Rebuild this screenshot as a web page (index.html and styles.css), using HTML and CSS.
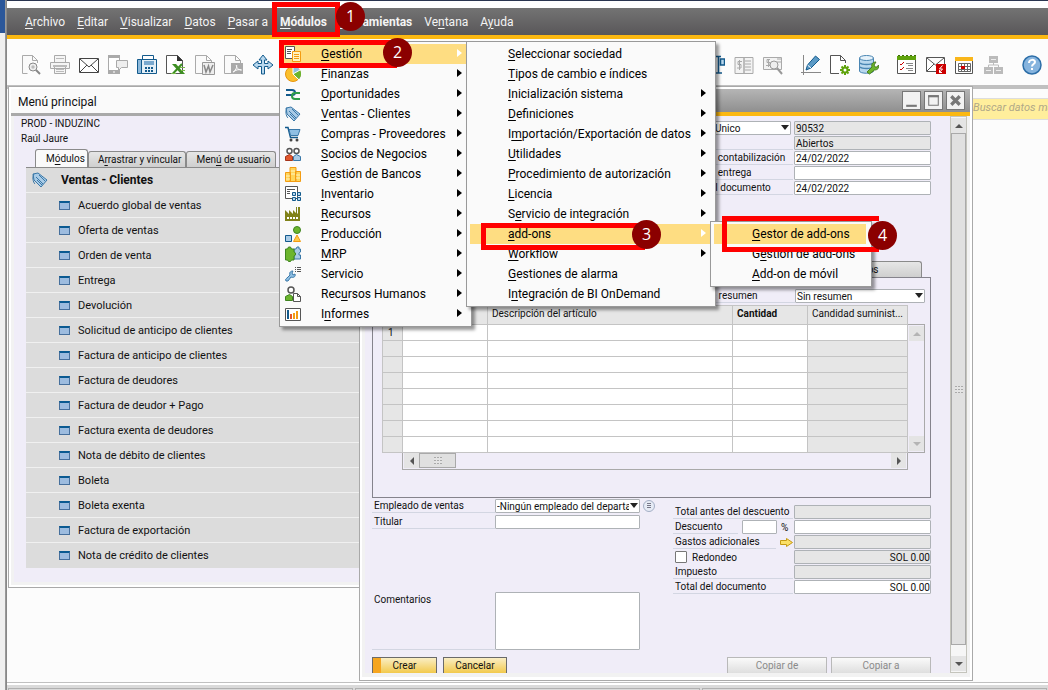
FILE: index.html
```html
<!DOCTYPE html>
<html lang="es">
<head>
<meta charset="utf-8">
<title>Menú principal</title>
<link rel="stylesheet" href="styles.css">
</head>
<body>
<div class="screen">
<div class="edge"></div>
<div class="app">
<div class="topstrip"></div>
<nav class="menubar">
<button><u>A</u>rchivo</button><button><u>E</u>ditar</button><button><u>V</u>isualizar</button><button><u>D</u>atos</button><button><u>P</u>asar a</button><button class="strong"><u>M</u>ódulos</button><button class="strong"><u>H</u>erramientas</button><button>Ve<u>n</u>tana</button><button>A<u>y</u>uda</button>
</nav>

<div class="toolbar">
<button aria-label="Vista previa"><svg viewBox="0 0 20 20"><path d="M16.500 8V5.500l-5-5h-10v18h5M11.500.500v5h5" fill="#fafafa" stroke="#aaa"/><circle cx="12" cy="12" r="4" fill="#eee" stroke="#888"/><circle cx="12" cy="12" r="1.700" fill="#bbb"/><path d="M15 15l4 4" stroke="#888" stroke-width="2"/></svg></button>
<button aria-label="Imprimir"><svg viewBox="0 0 20 20"><path d="M4.500 7V.5h11V7M.5 7.500h19v6H.5zM4.500 11.500h11v7h-11z" fill="#f5f5f5" stroke="#aaa"/><path d="M3 10h14v2H3z" fill="#bbb"/><path d="M6 14.500h8M6 16.500h8M6 3.500h8" stroke="#bbb"/></svg></button>
<button aria-label="Correo"><svg viewBox="0 0 20 20"><path d="M.5 3.500h19v14H.5zM1 4l9 8 9-8M1 17l7-7M19 17l-7-7" fill="#fff" stroke="#444"/></svg></button>
<button aria-label="SMS"><svg viewBox="0 0 20 20"><path d="M.5.500h11v18H.5z" fill="#fff" stroke="#aaa"/><path d="M0 0h12v3H0zM0 15h12v4H0z" fill="#aaa"/><path d="M5 17h2" stroke="#fff"/><path d="M8.500 5.500h11v7h-6l-3 3v-3h-2z" fill="#eee" stroke="#aaa"/></svg></button>
<button aria-label="Fax"><svg viewBox="0 0 20 20"><path d="M5.500.500h11v4h-11z" fill="#fff" stroke="#135a8c"/><path d="M.5 4.500h4v14h-4z" fill="#8db9db" stroke="#135a8c"/><path d="M4.500 4.500h15v14h-15z" fill="#e4eff7" stroke="#135a8c"/><path d="M7 6h10v4H7z" fill="#7aa9cf"/><path d="M8 13h9M8 16h9" stroke="#135a8c" stroke-width="2" stroke-dasharray="2 1"/></svg></button>
<button aria-label="Excel"><svg viewBox="0 0 20 20"><path d="M.5.500h11l5 5v13H.5z" fill="#fff" stroke="#555"/><path d="M11 0v6h6z" fill="#333"/><path d="M6 9h4l9 10h-4z" fill="#3d8f22"/><path d="M16 9L7 18.500" stroke="#3d8f22" stroke-width="2"/><path d="M14 12.500h5M15 15.500h4M5 18.500h5" stroke="#77b84a"/></svg></button>
<button aria-label="Word"><svg viewBox="0 0 20 20"><path d="M.5.500h11l5 5v13H.5zM11.500.500v5h5" fill="#fafafa" stroke="#aaa"/><path d="M7.500 7.500h12v12h-12z" fill="#eee" stroke="#999"/><path d="M9 10l2 7 2.500-6 1.500 6 3-7" fill="none" stroke="#888" stroke-width="1.500"/></svg></button>
<button aria-label="PDF"><svg viewBox="0 0 20 20"><path d="M.5.500h11l5 5v13H.5zM11.500.500v5h5" fill="#fafafa" stroke="#aaa"/><path d="M7 8h12v11H7z" fill="#aaa"/><path d="M9 17c4-2 4-7 3.500-7s0 5 5 5c-3-1-6 0-8 2" stroke="#fff" fill="none"/></svg></button>
<button aria-label="Mover"><svg viewBox="0 0 20 20"><path d="M10 0l4 5h-2.500v3.500H15V6l5 4-5 4v-2.500h-3.500V19h-3v-7.500H5V14l-5-4 5-4v2.500h3.500V5H6z" fill="#b9d8ee" stroke="#135a8c"/></svg></button>
<span class="spacer"></span>
<button aria-label="Balance"><svg viewBox="0 0 20 20"><path d="M6 1.500h10M13.500 2v16M10 18h7M2 5.500h6v6H2zM15.500 4v6h4V4z" fill="#b9d8ee" stroke="#135a8c" stroke-width="1.500"/></svg></button>
<button aria-label="Asiento"><svg viewBox="0 0 20 20"><path d="M1 2.500h9v16H1zM10 2.500h9v16h-9z" fill="#f3f3f3" stroke="#aaa"/><path d="M8 6.500H4v3h3v3.500H3M5.500 5v10M11 6h6M11 9h6M11 12h6M11 15h6" fill="none" stroke="#aaa"/></svg></button>
<button aria-label="Ver asiento"><svg viewBox="0 0 20 20"><path d="M.5 2.500h18v12H.5z" fill="#f3f3f3" stroke="#aaa"/><path d="M7 4.500H4v3h3v3H3M5.500 4v8M14 4h4M14 7h4" fill="none" stroke="#aaa"/><circle cx="11" cy="10" r="4" fill="#eee" stroke="#999"/><path d="M14 13l5 6" stroke="#999" stroke-width="2"/></svg></button>
<button class="gap" aria-label="Diseño"><svg viewBox="0 0 20 20"><path d="M2.500 0v20M0 17.500h20" stroke="#888"/><path d="M5 15l1.500-5L14.500 1l4 3.500L10 13z" fill="#5b9ac6" stroke="#135a8c"/><path d="M6.500 10l3.500 3" stroke="#fff"/></svg></button>
<button aria-label="Configurar documento"><svg viewBox="0 0 20 20"><path d="M9 18.500H.5V.5h10l5 5V8M10.500.500v5h5" fill="#fff" stroke="#555"/><circle cx="15" cy="15" r="2.500" fill="#fff" stroke="#5fa30c" stroke-width="2"/><path d="M15 10v2M15 18v2M10 15h2M18 15h2M11.500 11.500l1.500 1.500M17 17l1.500 1.500M18.500 11.500L17 13M13 17l-1.500 1.500" stroke="#5fa30c" stroke-width="2"/></svg></button>
<button aria-label="Consultas"><svg viewBox="0 0 20 20"><path d="M.5 3v13c0 3 14 3 14 0V3" fill="#b9d8ee" stroke="#4a86b3"/><ellipse cx="7.500" cy="3" rx="7" ry="2.500" fill="#e6f2fa" stroke="#4a86b3"/><path d="M1 8c2 2 11 2 13 0M1 12c2 2 11 2 13 0" fill="none" stroke="#4a86b3" stroke-width="1.500"/><path d="M8 17l5-5c-1-3 1-5 4-5l-2 3 1 2h2l1.500-2c1 3-1 5-4 5l-5 4z" fill="#6cb52d" stroke="#4a7f1c"/></svg></button>
<button class="gap" aria-label="Actividades"><svg viewBox="0 0 20 20"><path d="M.5 3.500h18v15H.5z" fill="#fff" stroke="#555"/><path d="M0 1h19v4H0z" fill="#5fa30c"/><path d="M1 .500h18" stroke="#3c6b08" stroke-dasharray="2 2"/><path d="M3 9l1 1 3-3M3 14l1 1 3-3" fill="none" stroke="#c00"/><path d="M9 8.500h7M11 10.500h5M9 13.500h7M11 15.500h5" stroke="#888"/></svg></button>
<button aria-label="Mensajes"><svg viewBox="0 0 20 20"><path d="M.5 2.500h18v14H.5zM1 3l8.500 7L18 3M1 16l7-7" fill="#fff" stroke="#555"/><path d="M10 9h10v10H10z" fill="#c00"/><path d="M16.500 10.500l-3 3.500h3l-3 3.500M13.500 15v2.500h2.500" stroke="#fff" fill="none"/></svg></button>
<button aria-label="Calendario"><svg viewBox="0 0 20 20"><path d="M.5 2.500h17v16H.5z" fill="#fff" stroke="#555"/><path d="M0 2h18v4H0z" fill="#f9b61a"/><path d="M3.500 8.500h12v8h-12zM3.500 11.500h12M3.500 14.500h12M6.500 8v9M9.500 8v9M12.500 8v9" fill="none" stroke="#666"/><path d="M6 11h4v3H6z" fill="#c00"/></svg></button>
<button aria-label="Organigrama"><svg viewBox="0 0 20 20"><path d="M5 1h9v7H5zM0 12h9v7H0zM10 12h9v7h-9z" fill="#bbb"/><path d="M9.500 8v2M4.500 12v-2h10v2" fill="none" stroke="#bbb"/><path d="M7 4.500h5M2 15.500h5M12 15.500h5" stroke="#eee"/></svg></button>
<button class="gap" aria-label="Ayuda"><svg viewBox="0 0 20 20"><circle cx="10" cy="10" r="9" fill="#86b4de" stroke="#2c6ea8" stroke-width="1.500"/><path d="M7 8c0-4 6-4 6-1 0 2-3 2-3 4.500M10 13v2" fill="none" stroke="#fff" stroke-width="2"/></svg></button>
</div>

<main class="desktop">
<label class="search"><input type="text" placeholder="Buscar datos maestros y docs" aria-label="Buscar"></label>

<section class="win mainmenu">
<h1>Menú principal</h1>
<div class="mm-body">
<p>PROD - INDUZINC</p><p>Raúl Jaure</p>
<div class="tabs"><button class="on">M<u>ó</u>dulos</button><button>A<u>r</u>rastrar y vincular</button><button>Men<u>ú</u> de usuario</button></div>
<ul class="modules">
<li class="head"><svg viewBox="0 0 16 16"><path d="M1 2l5-1 9 7-6 7-7-7z" fill="#a9cbe6" stroke="#3a78a8"/><path d="M2 2c-2 3-1 8 1 10M4 5l7 7M7 3l6 6M5 8l5 5" fill="none" stroke="#3a78a8"/></svg>Ventas - Clientes</li>
<li><i></i>Acuerdo global de ventas</li><li><i></i>Oferta de ventas</li><li><i></i>Orden de venta</li><li><i></i>Entrega</li><li><i></i>Devolución</li><li><i></i>Solicitud de anticipo de clientes</li><li><i></i>Factura de anticipo de clientes</li><li><i></i>Factura de deudores</li><li><i></i>Factura de deudor + Pago</li><li><i></i>Factura exenta de deudores</li><li><i></i>Nota de débito de clientes</li><li><i></i>Boleta</li><li><i></i>Boleta exenta</li><li><i></i>Factura de exportación</li><li><i></i>Nota de crédito de clientes</li>
</ul>
</div>
</section>

<section class="win doc">
<header class="titlebar">
<button aria-label="Minimizar"><svg viewBox="0 0 16 16"><path d="M3 13h10" stroke="#777" stroke-width="2"/></svg></button>
<button aria-label="Maximizar"><svg viewBox="0 0 16 16"><path d="M3.500 3.500h9v9h-9z" fill="none" stroke="#777"/><path d="M3 4h10" stroke="#777" stroke-width="2"/></svg></button>
<button aria-label="Cerrar"><svg viewBox="0 0 16 16"><path d="M4 4l8 8M12 4l-8 8" stroke="#777" stroke-width="3"/></svg></button>
</header>
<div class="doc-body">
<div class="content">
<div class="fields head-fields">
<span class="combo serie"><select aria-label="Serie"><option>Unico</option></select></span><input class="ro" aria-label="Número" value="90532" readonly>
<span class="rule"></span><input class="ro" aria-label="Estado" value="Abiertos" readonly>
<label for="f1">Fecha de contabilización</label><input id="f1" value="24/02/2022">
<label for="f2">Fecha de entrega</label><input id="f2">
<label for="f3">Fecha del documento</label><input id="f3" value="24/02/2022">
</div>
<div class="doc-tabs"><button>Anexos</button></div>
<div class="panel">
<div class="summary"><label for="res">Tipo de resumen</label><span class="combo"><select id="res"><option>Sin resumen</option></select></span></div>
<div class="grid-row">
<table>
<colgroup><col class="c1"><col class="c2"><col><col class="c4"><col class="c5"></colgroup>
<thead><tr><th></th><th></th><th>Descripción del artículo</th><th class="b">Cantidad</th><th>Candidad suminist...</th></tr></thead>
<tbody>
<tr><th>1</th><td></td><td></td><td></td><td class="w"></td></tr>
<tr><th></th><td></td><td></td><td></td><td></td></tr><tr><th></th><td></td><td></td><td></td><td></td></tr><tr><th></th><td></td><td></td><td></td><td></td></tr><tr><th></th><td></td><td></td><td></td><td></td></tr><tr><th></th><td></td><td></td><td></td><td></td></tr><tr><th></th><td></td><td></td><td></td><td></td></tr><tr><th></th><td></td><td></td><td></td><td></td></tr>
</tbody></table>
<div class="vscroll"><span class="cap up"></span><span class="cap down"></span></div>
</div>
<div class="hscroll"><span class="cap left"></span><span class="thumb"><b class="grip"></b></span><span class="cap right"></span></div>
</div>
<div class="footer">
<div class="left-fields">
<label for="emp">Empleado de ventas</label><span class="combo"><select id="emp"><option>-Ningún empleado del departamento</option></select></span><button class="round" aria-label="Lista"><svg viewBox="0 0 12 12"><circle cx="6" cy="6" r="5.500" fill="#e6ebf5" stroke="#a3aec4"/><path d="M4 3.500h4M4 5.500h4M4 7.500h4" stroke="#778"/></svg></button>
<label for="tit">Titular</label><input id="tit"><span></span>
<label for="com" class="area-label">Comentarios</label><textarea id="com"></textarea>
</div>
<div class="fields totals">
<label for="t1">Total antes del descuento</label><input id="t1" class="ro" readonly>
<div class="split"><label for="t2">Descuento</label><input id="t2"><span>%</span></div><input aria-label="Importe de descuento">
<div class="split"><label for="t3">Gastos adicionales</label><svg class="go" viewBox="0 0 13 9"><path d="M.5 2.500h6v-2l6 4-6 4v-2h-6z" fill="#fbe066" stroke="#c59a14"/></svg></div><input id="t3" class="ro" readonly>
<label class="check"><input type="checkbox">Redondeo</label><input class="ro num" aria-label="Importe de redondeo" value="SOL 0.00" readonly>
<label for="t5">Impuesto</label><input id="t5" class="ro" readonly>
<label for="t6">Total del documento</label><input id="t6" class="num" value="SOL 0.00">
</div>
</div>
<div class="actions"><button class="primary">Crear</button><button class="cancel">Cancelar</button><span class="spacer"></span><button class="copy" disabled>Copiar de</button><button class="copy" disabled>Copiar a</button></div>
</div>
<div class="scrollbar"><span class="cap up"></span><span class="track"><b class="grip"></b></span><span class="cap down"></span></div>
</div>
</section>
</main>
<footer class="status"><span></span><span></span><span></span></footer>
</div>

<div class="menu m1">
<button class="hot more"><svg viewBox="0 0 16 16"><path d="M.5.500h9v12h-9z" fill="#fff" stroke="#555"/><path d="M2 3.500h5M2 5.500h4M2 7.500h4" stroke="#555"/><path d="M7.500 5.500h8v10h-8z" fill="#fff3c0" stroke="#f39c12"/><path d="M9 8.500h5M9 10.500h5M9 12.500h5" stroke="#f39c12"/></svg><span><u>G</u>estión</span></button>
<button class="more"><svg viewBox="0 0 16 16"><circle cx="8" cy="8" r="7.500" fill="#fbc02d" stroke="#e8940c"/><path d="M8 8V0a8 8 0 0 1 6 13z" fill="#8fbfe3"/><path d="M8 8l7-4a8 8 0 0 1-1 9z" fill="#6cb52d"/><path d="M8 0v8l6 6M8 8l7-4" stroke="#fff" fill="none"/></svg><span><u>F</u>inanzas</span></button>
<button class="more"><svg viewBox="0 0 16 16"><path d="M1 4h6q3 0 3 2.500T7 9H1" fill="none" stroke="#135a8c" stroke-width="2"/><path d="M15 7h-5q-3 0-3 3t3 3h5" fill="none" stroke="#2e9c49" stroke-width="2"/></svg><span><u>O</u>portunidades</span></button>
<button class="more"><svg viewBox="0 0 16 16"><path d="M1 2l5-1 9 7-6 7-7-7z" fill="#a9cbe6" stroke="#3a78a8"/><path d="M2 2c-2 3-1 8 1 10M4 5l7 7M7 3l6 6M5 8l5 5" fill="none" stroke="#3a78a8"/></svg><span><u>V</u>entas - Clientes</span></button>
<button class="more"><svg viewBox="0 0 16 16"><path d="M0 1.500h3l2.500 10H13" fill="none" stroke="#135a8c" stroke-width="1.500"/><path d="M4 3.500h11l-2 6H5.500z" fill="#8fbfe3" stroke="#3a78a8"/><circle cx="6" cy="14" r="1.500" fill="#444"/><circle cx="12" cy="14" r="1.500" fill="#444"/></svg><span><u>C</u>ompras - Proveedores</span></button>
<button class="more"><svg viewBox="0 0 16 16"><circle cx="4.500" cy="5" r="2.500" fill="#fff" stroke="#555" stroke-width="1.500"/><circle cx="11.500" cy="5" r="2.500" fill="#fff" stroke="#555" stroke-width="1.500"/><path d="M.5 14.500v-4l4-2 3 2v4z" fill="#e2572b" stroke="#a5341a"/><path d="M8.500 14.500v-4l3-2 4 2v4z" fill="#a9cbe6" stroke="#3a78a8"/></svg><span><u>S</u>ocios de Negocios</span></button>
<button class="more"><svg viewBox="0 0 16 16"><path d="M5 1.500h6v14H5zM.5 6.500h5v9h-5zM10.500 5.500h5v10h-5z" fill="#ffd65c" stroke="#f39c12"/><path d="M6 5h4M6 8h4M1 10h4M1 13h4M11 9h4M11 12h4" stroke="#fff3c0"/></svg><span>G<u>e</u>stión de Bancos</span></button>
<button class="more"><svg viewBox="0 0 16 16"><path d="M.5.500h12v12H.5z" fill="#fff" stroke="#555"/><path d="M2 3.500h8M2 5.500h3M2 7.500h3" stroke="#555"/><path d="M7.500 6.500h3v3h-3zM12.500 6.500h3v3h-3zM7.500 11.500h3v3h-3zM12.500 11.500h3v3h-3z" fill="#b9d8ee" stroke="#135a8c"/></svg><span><u>I</u>nventario</span></button>
<button class="more"><svg viewBox="0 0 16 16"><path d="M0 15V4l4 4V4l4 4V4l3 3V1h1v6l1 1V1h2v14z" fill="#80821a"/><path d="M2 12h11" stroke="#fff" stroke-width="2" stroke-dasharray="2 1"/></svg><span><u>R</u>ecursos</span></button>
<button class="more"><svg viewBox="0 0 16 16"><circle cx="12" cy="4" r="3.500" fill="#6cb52d" stroke="#3f8420"/><path d="M.5 9.500h6v6h-6z" fill="#a9cbe6" stroke="#135a8c"/><path d="M12 9l3.500 6.500h-7z" fill="#ffc94a" stroke="#f39c12"/></svg><span><u>P</u>roducción</span></button>
<button class="more"><svg viewBox="0 0 16 16"><path d="M9 3h2l1-2h2v2h1.500v3l-1.500 1v2h1.500v4H9V9L7 8l2-2z" fill="#a9cbe6" stroke="#3a78a8"/><path d="M.5 3h2l1-2h2l1 2H9v3l1.500 1v2L9 10v4H6.500l-1 1.500h-2l-1-1.500h-2z" fill="#6cb52d" stroke="#3f8420"/></svg><span><u>M</u>RP</span></button>
<button class="more"><svg viewBox="0 0 16 16"><path d="M1 15c-1-2 0-2 1-3l3-3c-1-3 1-4 3-4L7 7l1 2 2-1c1 3-2 4-4 3l-3 4z" fill="#8fbfe3" stroke="#3a78a8"/><path d="M12 1.500h4M12 3.500h4M12 5.500h4M10 1.500h1M10 3.500h1M10 5.500h1" stroke="#555"/></svg><span>Servicio</span></button>
<button class="more"><svg viewBox="0 0 16 16"><circle cx="6" cy="4" r="3" fill="#fff" stroke="#555" stroke-width="1.500"/><path d="M.5 14.500v-4l4-2 3 2v4z" fill="#6cb52d" stroke="#3f8420"/><path d="M8.500 7.500h4l3 3v5h-7zM12.500 7.500v3h3" fill="#fff" stroke="#555"/></svg><span>Rec<u>u</u>rsos Humanos</span></button>
<button class="more"><svg viewBox="0 0 16 16"><path d="M.5 2.500h15v12H.5z" fill="#fff" stroke="#555"/><path d="M3 4v9" stroke="#135a8c" stroke-width="2"/><path d="M6 8v5" stroke="#e2572b" stroke-width="2"/><path d="M9 7v6M12 5v8" stroke="#f39c12" stroke-width="2"/></svg><span>I<u>n</u>formes</span></button>
</div>
<div class="menu m2">
<button><span><u>S</u>eleccionar sociedad</span></button>
<button><span><u>T</u>ipos de cambio e índices</span></button>
<button class="more"><span><u>I</u>nicialización sistema</span></button>
<button class="more"><span><u>D</u>efiniciones</span></button>
<button class="more"><span>I<u>m</u>portación/Exportación de datos</span></button>
<button class="more"><span><u>U</u>tilidades</span></button>
<button class="more"><span><u>P</u>rocedimiento de autorización</span></button>
<button class="more"><span><u>L</u>icencia</span></button>
<button class="more"><span>S<u>e</u>rvicio de integración</span></button>
<button class="more hot"><span><u>a</u>dd-ons</span></button>
<button class="more"><span><u>W</u>orkflow</span></button>
<button><span><u>G</u>estiones de alarma</span></button>
<button><span>I<u>n</u>tegración de BI OnDemand</span></button>
</div>
<div class="menu m3">
<button class="hot"><span><u>G</u>estor de add-ons</span></button>
<button><span>G<u>e</u>stión de add-ons</span></button>
<button><span><u>A</u>dd-on de móvil</span></button>
</div>

<div class="mark k1"></div><div class="mark k2"></div><div class="mark k3"></div><div class="mark k4"></div>
<span class="dot d1">1</span><span class="dot d2">2</span><span class="dot d3">3</span><span class="dot d4">4</span>
</div>
</body>
</html>
```
FILE: styles.css
```css
* { box-sizing: border-box; }
body { margin: 0; font: 12px Roboto, "Noto Sans", sans-serif; color: #111; }
button, input, select, textarea { font: inherit; color: inherit; margin: 0; padding: 0; border: 0; border-radius: 0; background: none; text-align: left; }
svg { display: block; }
u { text-underline-offset: 2px; }
.spacer { flex: 1; }

.screen { position: relative; display: flex; height: 100vh; overflow: hidden; }
.edge { width: 6px; background: linear-gradient(#2b579a 33px, #f0f0f0 33px); border-right: 1px solid #999; }
.app { flex: 1; min-width: 0; display: flex; flex-direction: column; border-left: 1px solid #888; }
.topstrip { height: 8px; background: #fff; border-top: 1px solid #2a3550; }

.menubar { display: flex; gap: 12px; height: 31px; padding: 0 18px; background: linear-gradient(#737373, #595759); border-bottom: 4px solid #fbb812; color: #f4f4f4; }
.menubar .strong { font-weight: 700; }

.toolbar { display: flex; gap: 9px; align-items: center; height: 46px; padding: 6px 6px 1px 14px; background: #fcfcfc; }
.toolbar svg { width: 20px; height: 20px; }
.toolbar .gap { margin-left: 9px; }

.desktop { position: relative; flex: 1; background: #fcfcfc; border-top: 4px solid #c0c0c0; }
.search { position: absolute; top: 9px; right: 0; width: 75px; }
.search input { display: block; width: 100%; height: 22px; padding-bottom: 4px; background: #ffee9c; border: 1px solid #ddd; border-width: 1px 0; font-size: 11px; font-style: italic; }
.search input::placeholder { color: #b0a888; opacity: 1; }

.win { position: absolute; background: #fff; border: 1px solid #a9a9a9; }
.mainmenu { top: -3px; left: 1px; width: 360px; padding: 2px; }
.mainmenu h1 { margin: 0; padding: 0 7px; height: 27px; line-height: 26px; font-size: 12px; font-weight: 400; background: #fafafa; border-bottom: 3px solid #a9a9a9; }
.mm-body { background: #f0edf8; border: 3px solid #f2f2f2; border-top: 0; font-size: 10px; padding: 0 0 14px 12px; }
.mm-body p { margin: 0 0 0 -5px; height: 15px; line-height: 15px; }
.tabs { display: flex; align-items: flex-end; height: 20px; margin-top: 2px; padding-left: 9px; border-bottom: 1px solid #8a8a8a; }
.tabs button { height: 16px; padding: 0 4px 0 9px; border: 1px solid #8a8a8a; border-bottom: 0; border-radius: 3px 3px 0 0; background: linear-gradient(#e6e6e6, #cfcfcf); white-space: nowrap; }
.tabs .on { height: 18px; padding: 0 2px 0 10px; background: #fafafa; }
.modules { list-style: none; margin: 0; padding: 0; font-size: 11px; }
.modules li { display: flex; align-items: center; height: 25px; padding-left: 33px; background: #dcdcdc; border-bottom: 1px solid #f0f0f0; }
.modules li:last-child { border-bottom: 0; }
.modules .head { padding-left: 6px; gap: 13px; font-size: 12px; font-weight: 700; }
.modules .head svg { width: 16px; height: 16px; }
.modules i { width: 11px; height: 9px; margin-right: 8px; background: #9dbcdf; border: 1px solid #466f9c; border-top: 2px solid #0a5a91; }

.doc { top: -3px; bottom: 1px; left: 352px; right: 75px; padding: 2px 2px 3px; display: flex; flex-direction: column; }
.titlebar { display: flex; justify-content: flex-end; gap: 3px; height: 27px; padding: 2px 5px; background: linear-gradient(#b5b5b5, #8f8f8f); border-bottom: 4px solid #fbb812; }
.titlebar button { width: 19px; height: 19px; background: #f2f2f2; border: 1px solid #777; }
.doc-body { flex: 1; min-height: 0; display: flex; background: #f0edf8; border: 3px solid #f2f2f2; border-top: 0; border-bottom-width: 4px; font-size: 10px; }
.content { flex: 1; min-width: 0; display: flex; flex-direction: column; padding: 5px 19px 0 7px; }
.content input, .content select, .content textarea { height: 14px; width: 100%; min-width: 0; padding: 0 1px; background: #fff; border: 1px solid #aeb2b6; border-radius: 1px; }
.content input.ro { background: #e6e6e6; }
.content input.num { text-align: right; padding: 0; }
.combo { position: relative; display: block; }
.combo select { display: block; appearance: none; padding-right: 10px; }
.combo::after { content: ""; position: absolute; right: 2px; top: 4px; border: 4px solid transparent; border-top: 5px solid #222; border-bottom: 0; }

.fields { display: grid; grid-template-columns: 120px 137px; grid-auto-rows: 14px; gap: 1px; }
.fields label, .left-fields label, .summary label { line-height: 13px; padding-left: 2px; border-bottom: 1px solid #d3d6e2; white-space: nowrap; }
.rule { border-bottom: 1px solid #d3d6e2; }
.head-fields { justify-content: end; }
.serie { margin: 0 2px 0 10px; }
.content .serie select { padding-left: 31px; }

.doc-tabs { display: flex; justify-content: flex-end; margin-top: 66px; padding-right: 9px; }
.doc-tabs button { width: 120px; height: 16px; text-align: center; border: 1px solid #8a8a8a; border-bottom: 0; border-radius: 3px 3px 0 0; background: linear-gradient(#e6e6e6, #cfcfcf); }
.panel { border: 1px solid #85838c; padding: 11px 5px 27px 9px; }
.summary { display: flex; justify-content: flex-end; margin-bottom: 2px; }
.summary label { width: 114px; }
.summary .combo { width: 130px; }
.grid-row { display: flex; align-items: flex-end; }
table { flex: 1; min-width: 0; table-layout: fixed; border-collapse: collapse; }
.c1 { width: 20px; } .c2 { width: 85px; } .c4 { width: 75px; } .c5 { width: 99px; }
th, td { height: 16px; padding: 0 4px; border: 1px solid #c4c4c4; background: #fff; line-height: 12px; text-align: left; font-weight: 400; white-space: nowrap; overflow: hidden; }
thead th { height: 19px; padding-bottom: 3px; }
th, td:last-child { background: #e6e6e6; }
td.w { background: #fff; }
.b { font-weight: 700; }
tbody th { padding-left: 5px; }
.vscroll { display: flex; flex-direction: column; justify-content: space-between; width: 17px; height: 129px; border: 1px solid #a9a9a9; border-left: 0; padding: 1px; }
.hscroll { display: flex; height: 17px; margin: 0 17px 0 20px; padding: 0 1px 1px; border: 1px solid #a9a9a9; border-top: 0; }
.hscroll .right { margin-left: auto; }
.thumb { display: flex; width: 37px; align-items: center; justify-content: center; background: #e0e0e0; border: 1px solid #a9a9a9; }
.grip { width: 8px; height: 7px; background: repeating-linear-gradient(90deg, transparent 0 2px, #e4e4e4 2px 3px), repeating-linear-gradient(#aaa 0 1px, #e4e4e4 1px 3px); }
.cap { display: flex; flex: none; align-items: center; justify-content: center; width: 15px; height: 15px; background: #e4e4e4; }
.cap::before { content: ""; border: 4px solid transparent; }
.up::before { border-bottom-color: #555; border-top: 0; }
.down::before { border-top-color: #555; border-bottom: 0; }
.left::before { border-right-color: #555; border-left: 0; }
.right::before { border-left-color: #555; border-right: 0; }
.vscroll .up::before { border-bottom-color: #b4b4b4; }
.vscroll .down::before { border-top-color: #b4b4b4; }

.footer { display: flex; justify-content: space-between; margin-top: 1px; }
.left-fields { display: grid; grid-template-columns: 123px 145px 15px; grid-template-rows: 14px 14px auto; row-gap: 2px; column-gap: 0; }
.round { width: 12px; margin-left: 3px; }
.round svg { width: 12px; height: 12px; }
.content .left-fields textarea { height: 58px; resize: none; }
.left-fields .area-label, .left-fields textarea { margin-top: 61px; }
.left-fields .area-label { height: 58px; padding-top: 1px; }
.totals { margin-top: 6px; align-self: start; }
.split { display: flex; align-items: center; gap: 4px; }
.split label { flex: 1; }
.content .split input { width: 35px; }
.split span { width: 12px; }
.go { width: 13px; height: 9px; }
.fields .check { display: flex; align-items: center; gap: 5px; border: 0; }
.content .check input { appearance: none; width: 12px; height: 12px; border: 1px solid #777; }
.actions { display: flex; gap: 6px; margin-top: auto; }
.actions button { height: 16px; border: 1px solid #6a6a6a; border-bottom: 0; text-align: center; background: linear-gradient(#faeec4, #f2c94c); }
.actions .primary { width: 65px; background: linear-gradient(90deg, #f6a51f 8px, transparent 8px), linear-gradient(#faeec4, #f2c94c); }
.actions .cancel { width: 64px; }
.actions .copy { width: 100px; margin-left: -2px; color: #8a8a8a; border-color: #b9b9b9; background: linear-gradient(#fafafa, #dedede); }
.scrollbar { display: flex; flex-direction: column; width: 17px; border: 1px solid #c4c4bc; padding: 1px 0; background: #f6f6f6; }
.scrollbar .track { flex: 1; display: flex; align-items: center; justify-content: center; margin: 0 0 11px; border: 1px solid #a9a9a9; background: #e0e0e0; }

.status { display: flex; gap: 2px; height: 8px; padding: 3px 1px 0; border-top: 1px solid #c0c0c0; background: linear-gradient(#fff 2px, #dadada 2px); }
.status span { flex: 1; height: 3px; margin-top: 2px; border: 1px solid #b0b0b0; border-bottom: 0; }

.menu { position: absolute; top: 41px; padding: 2px 5px 2px 3px; background: #fafafa; border: 1px solid #999; box-shadow: 3px 3px 3px #0006; }
.menu button { position: relative; display: flex; align-items: center; width: 100%; height: 20px; white-space: nowrap; color: #000; }
.menu svg { width: 16px; height: 16px; margin: 0 20px 0 2px; }
.menu .hot { background: #fedd82; }
.menu .more::after { content: ""; position: absolute; right: 4px; top: 5px; border: 4px solid transparent; border-left: 5px solid #000; border-right: 0; }
.menu .hot::after { border-left-color: #fff; }
.m1 { left: 279px; width: 193px; }
.m2 { left: 466px; width: 250px; }
.m2 span { padding-left: 38px; }
.m3 { left: 710px; top: 221px; width: 162px; }
.m3 span { padding-left: 38px; }

.mark { position: absolute; border: 5px solid #f00; }
.k1 { left: 272px; top: 2px; width: 68px; height: 35px; }
.k2 { left: 279px; top: 40px; width: 118px; height: 28px; border-right: 0; }
.k3 { left: 481px; top: 223px; width: 164px; height: 27px; border-right: 0; }
.k4 { left: 722px; top: 216px; width: 157px; height: 36px; border-right: 0; }
.dot { position: absolute; width: 29px; height: 29px; border-radius: 50%; background: #8b0000; color: #fff; font: 16px/29px "Open Sans", sans-serif; text-align: center; }
.d1 { left: 336px; top: 2px; }
.d2 { left: 383px; top: 38px; }
.d3 { left: 632px; top: 220px; }
.d4 { left: 868px; top: 221px; }
```
